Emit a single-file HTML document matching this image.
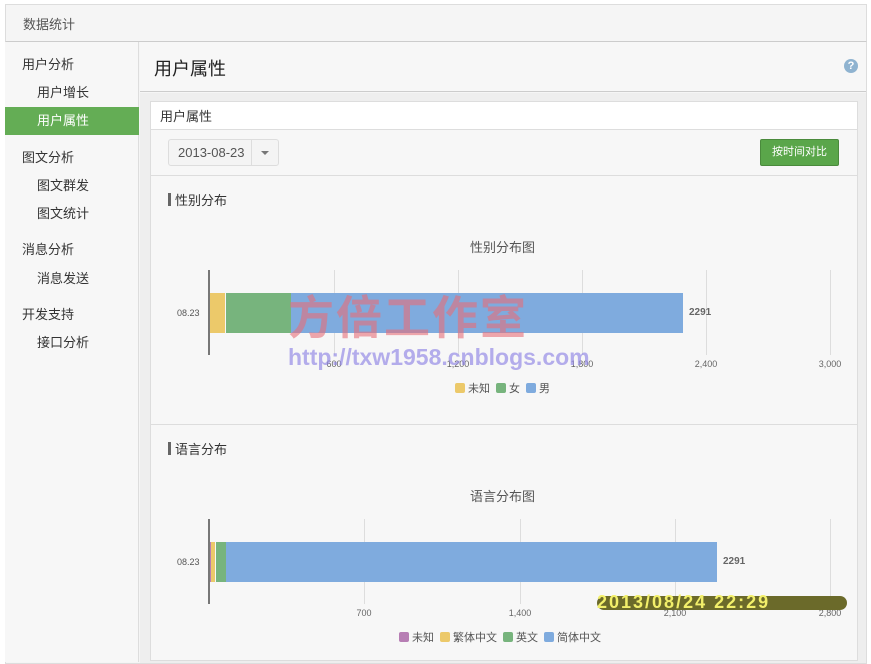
<!DOCTYPE html>
<html><head><meta charset="utf-8"><style>
*{margin:0;padding:0;box-sizing:border-box}
body{width:871px;height:653px;background:#fff;font-family:"Liberation Sans","Noto Sans CJK SC",sans-serif;position:relative;overflow:hidden;color:#333}
.a{position:absolute}
.t{font-size:13px;color:#333;white-space:nowrap}
.g{position:absolute;width:1px;background:#ddd}
.tick{position:absolute;font-size:9px;color:#666;transform:translateX(-50%)}
.sw{display:inline-block;width:10px;height:10px;border-radius:2px;vertical-align:-1px;margin:0 3px 0 6px}
</style></head><body>
<div class="a" style="left:5px;top:4px;width:862px;height:660px;border:1px solid #ddd;background:#f5f5f5"></div>
<div class="a" style="left:5px;top:4px;width:862px;height:38px;background:#f5f5f5;border:1px solid #ddd;border-bottom:1px solid #ccc"></div>
<div class="a t" style="left:23px;top:14px;color:#555">数据统计</div>
<div class="a" style="left:5px;top:42px;width:134px;height:620px;background:#f7f7f7;border-right:1px solid #ddd"></div>
<div class="a t" style="left:22px;top:54px">用户分析</div>
<div class="a t" style="left:37px;top:82px">用户增长</div>
<div class="a" style="left:5px;top:107px;width:134px;height:28px;background:#64ad55"></div>
<div class="a t" style="left:37px;top:110px;color:#fff">用户属性</div>
<div class="a t" style="left:22px;top:147px">图文分析</div>
<div class="a t" style="left:37px;top:175px">图文群发</div>
<div class="a t" style="left:37px;top:203px">图文统计</div>
<div class="a t" style="left:22px;top:239px">消息分析</div>
<div class="a t" style="left:37px;top:268px">消息发送</div>
<div class="a t" style="left:22px;top:304px">开发支持</div>
<div class="a t" style="left:37px;top:332px">接口分析</div>
<div class="a" style="left:140px;top:42px;width:726px;height:50px;background:#f7f7f7;border-bottom:1px solid #ccc"></div>
<div class="a" style="left:154px;top:55px;font-size:18px;color:#222">用户属性</div>
<div class="a" style="left:844px;top:59px;width:14px;height:14px;border-radius:50%;background:#8fb3d0;color:#fff;font-size:11px;font-weight:bold;text-align:center;line-height:14px">?</div>
<div class="a" style="left:140px;top:93px;width:726px;height:570px;background:#eee"></div>
<div class="a" style="left:150px;top:101px;width:708px;height:560px;background:#f7f7f7;border:1px solid #ddd"></div>
<div class="a" style="left:151px;top:102px;width:706px;height:28px;background:#fff;border-bottom:1px solid #ddd"></div>
<div class="a t" style="left:160px;top:106px">用户属性</div>
<div class="a" style="left:151px;top:175px;width:706px;height:1px;background:#ddd"></div>
<div class="a" style="left:168px;top:139px;width:111px;height:27px;border:1px solid #ddd;border-radius:3px;background:#f4f4f4"></div>
<div class="a" style="left:251px;top:140px;width:1px;height:25px;background:#ddd"></div>
<div class="a" style="left:178px;top:145px;font-size:13px;color:#555">2013-08-23</div>
<div class="a" style="left:261px;top:151px;width:0;height:0;border-left:4px solid transparent;border-right:4px solid transparent;border-top:4px solid #777"></div>
<div class="a" style="left:760px;top:139px;width:79px;height:27px;background:#5aa64a;border:1px solid #4a8a3c;border-radius:2px;color:#fff;font-size:11px;text-align:center;line-height:25px">按时间对比</div>

<div class="a" style="left:168px;top:193px;width:3px;height:13px;background:#666"></div>
<div class="a t" style="left:175px;top:190px">性别分布</div>
<div class="a" style="left:470px;top:237px;font-size:13px;color:#555">性别分布图</div>
<div class="g" style="left:334px;top:270px;height:85px"></div>
<div class="g" style="left:458px;top:270px;height:85px"></div>
<div class="g" style="left:582px;top:270px;height:85px"></div>
<div class="g" style="left:706px;top:270px;height:85px"></div>
<div class="g" style="left:830px;top:270px;height:85px"></div>
<div class="a" style="left:208px;top:270px;width:2px;height:85px;background:#777"></div>
<div class="a" style="left:210px;top:293px;width:15px;height:40px;background:#ecc96a"></div>
<div class="a" style="left:226px;top:293px;width:65px;height:40px;background:#77b47d"></div>
<div class="a" style="left:291px;top:293px;width:392px;height:40px;background:#7fabde"></div>
<div class="a" style="left:177px;top:308px;font-size:9px;color:#555">08.23</div>
<div class="a" style="left:689px;top:307px;font-size:10px;font-weight:bold;color:#666">2291</div>
<div class="tick" style="left:334px;top:359px">600</div>
<div class="tick" style="left:458px;top:359px">1,200</div>
<div class="tick" style="left:582px;top:359px">1,800</div>
<div class="tick" style="left:706px;top:359px">2,400</div>
<div class="tick" style="left:830px;top:359px">3,000</div>
<div class="a" style="left:449px;top:380px;font-size:11px;color:#555"><span class="sw" style="background:#ecc96a"></span>未知<span class="sw" style="background:#77b47d"></span>女<span class="sw" style="background:#7fabde"></span>男</div>
<div class="a" style="left:288px;top:282px;font-size:46px;font-weight:bold;color:rgba(230,110,120,.6);letter-spacing:2px">方倍工作室</div>
<div class="a" style="left:288px;top:344px;font-size:23px;font-weight:bold;color:rgba(150,140,230,.7)">http://txw1958.cnblogs.com</div>

<div class="a" style="left:151px;top:424px;width:706px;height:1px;background:#ddd"></div>
<div class="a" style="left:168px;top:442px;width:3px;height:13px;background:#666"></div>
<div class="a t" style="left:175px;top:439px">语言分布</div>
<div class="a" style="left:470px;top:486px;font-size:13px;color:#555">语言分布图</div>
<div class="g" style="left:364px;top:519px;height:85px"></div>
<div class="g" style="left:520px;top:519px;height:85px"></div>
<div class="g" style="left:675px;top:519px;height:85px"></div>
<div class="g" style="left:830px;top:519px;height:85px"></div>
<div class="a" style="left:208px;top:519px;width:2px;height:85px;background:#777"></div>
<div class="a" style="left:210px;top:542px;width:1px;height:40px;background:#b77eb4"></div>
<div class="a" style="left:211px;top:542px;width:4px;height:40px;background:#ecc96a"></div>
<div class="a" style="left:216px;top:542px;width:10px;height:40px;background:#77b47d"></div>
<div class="a" style="left:226px;top:542px;width:491px;height:40px;background:#7fabde"></div>
<div class="a" style="left:177px;top:557px;font-size:9px;color:#555">08.23</div>
<div class="a" style="left:723px;top:556px;font-size:10px;font-weight:bold;color:#666">2291</div>
<div class="tick" style="left:364px;top:608px">700</div>
<div class="tick" style="left:520px;top:608px">1,400</div>
<div class="tick" style="left:675px;top:608px">2,100</div>
<div class="tick" style="left:830px;top:608px">2,800</div>
<div class="a" style="left:393px;top:629px;font-size:11px;color:#555"><span class="sw" style="background:#b77eb4"></span>未知<span class="sw" style="background:#ecc96a"></span>繁体中文<span class="sw" style="background:#77b47d"></span>英文<span class="sw" style="background:#7fabde"></span>简体中文</div>
<div class="a" style="left:597px;top:596px;width:250px;height:14px;background:#6b6a2a;border-radius:7px"></div>
<div class="a" style="left:597px;top:592px;font-size:18px;font-weight:bold;color:#f2ef6a;letter-spacing:2px">2013/08/24 22:29</div>
</body></html>
